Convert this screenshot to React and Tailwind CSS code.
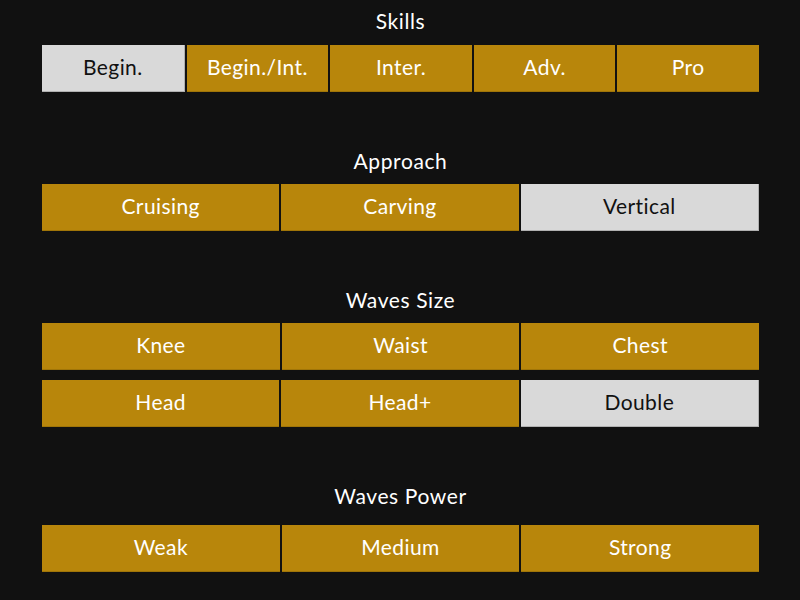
import React from "react";

const font = { fontFamily: "Lato, 'Open Sans', 'Liberation Sans', sans-serif" };

function Btn({ label, active }) {
  return (
    <div
      className={
        active
          ? "flex-1 h-[47px] pb-[3px] flex items-center justify-center bg-[#d9d9d9] text-[#111111] border-b border-r border-[#b0b0b0] text-[21px] tracking-[0.4px]"
          : "flex-1 h-[47px] pb-[3px] flex items-center justify-center bg-[#b8860b] text-white border-b border-[#a07508] text-[21px] tracking-[0.4px]"
      }
    >
      {label}
    </div>
  );
}

function Row({ items, active, className = "" }) {
  return (
    <div className={"flex gap-[2px] " + className}>
      {items.map((it) => (
        <Btn key={it} label={it} active={it === active} />
      ))}
    </div>
  );
}

function Title({ children, className = "" }) {
  return (
    <div className={"h-[24px] leading-[24px] text-center text-white text-[21px] tracking-[0.6px] " + className}>
      {children}
    </div>
  );
}

export default function App() {
  return (
    <div className="w-[800px] h-[600px] bg-[#111111] overflow-hidden" style={font}>
      <div className="ml-[42px] w-[717px] pt-[9px]">
        <Title className="mb-[12px]">Skills</Title>
        <Row items={["Begin.", "Begin./Int.", "Inter.", "Adv.", "Pro"]} active="Begin." />

        <Title className="mt-[57px] mb-[11px]">Approach</Title>
        <Row items={["Cruising", "Carving", "Vertical"]} active="Vertical" />

        <Title className="mt-[57px] mb-[11px]">Waves Size</Title>
        <Row items={["Knee", "Waist", "Chest"]} />
        <Row items={["Head", "Head+", "Double"]} active="Double" className="mt-[10px]" />

        <Title className="mt-[57px] mb-[17px]">Waves Power</Title>
        <Row items={["Weak", "Medium", "Strong"]} />
      </div>
    </div>
  );
}
